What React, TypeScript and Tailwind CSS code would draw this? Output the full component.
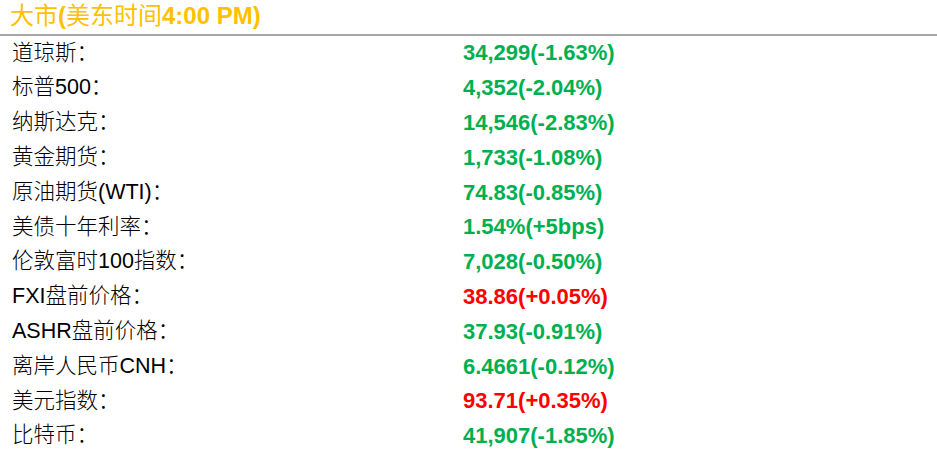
const rows = [
  { label: "道琼斯：", value: "34,299(-1.63%)", up: false },
  { label: "标普500：", value: "4,352(-2.04%)", up: false },
  { label: "纳斯达克：", value: "14,546(-2.83%)", up: false },
  { label: "黄金期货：", value: "1,733(-1.08%)", up: false },
  { label: "原油期货(WTI)：", value: "74.83(-0.85%)", up: false },
  { label: "美债十年利率：", value: "1.54%(+5bps)", up: false },
  { label: "伦敦富时100指数：", value: "7,028(-0.50%)", up: false },
  { label: "FXI盘前价格：", value: "38.86(+0.05%)", up: true },
  { label: "ASHR盘前价格：", value: "37.93(-0.91%)", up: false },
  { label: "离岸人民币CNH：", value: "6.4661(-0.12%)", up: false },
  { label: "美元指数：", value: "93.71(+0.35%)", up: true },
  { label: "比特币：", value: "41,907(-1.85%)", up: false },
];

export default function App() {
  return (
    <div className="w-[937px] h-[458px] bg-white font-['Liberation_Sans','Noto_Sans_CJK_SC',sans-serif] overflow-hidden">
      {/* Header */}
      <div className="h-[34px] flex items-center pl-[10px] pb-[2px] text-[24px] text-[#ffc000] leading-none">
        <span className="font-normal">大市</span>
        <span className="font-bold">(</span>
        <span className="font-normal">美东时间</span>
        <span className="font-bold">4:00 PM)</span>
      </div>
      <div className="h-[2px] bg-[#a6a6a6]" />

      {/* Rows */}
      <div className="flex flex-col">
        {rows.map((row, i) => (
          <div key={i} className="h-[34.8px] flex items-center">
            <div className="w-[463px] pl-[12px] text-[21.5px] text-black font-light leading-none">
              {row.label}
            </div>
            <div
              className={
                "text-[22px] font-bold leading-none " +
                (row.up ? "text-[#ff0000]" : "text-[#00b050]")
              }
            >
              {row.value}
            </div>
          </div>
        ))}
      </div>
    </div>
  );
}
